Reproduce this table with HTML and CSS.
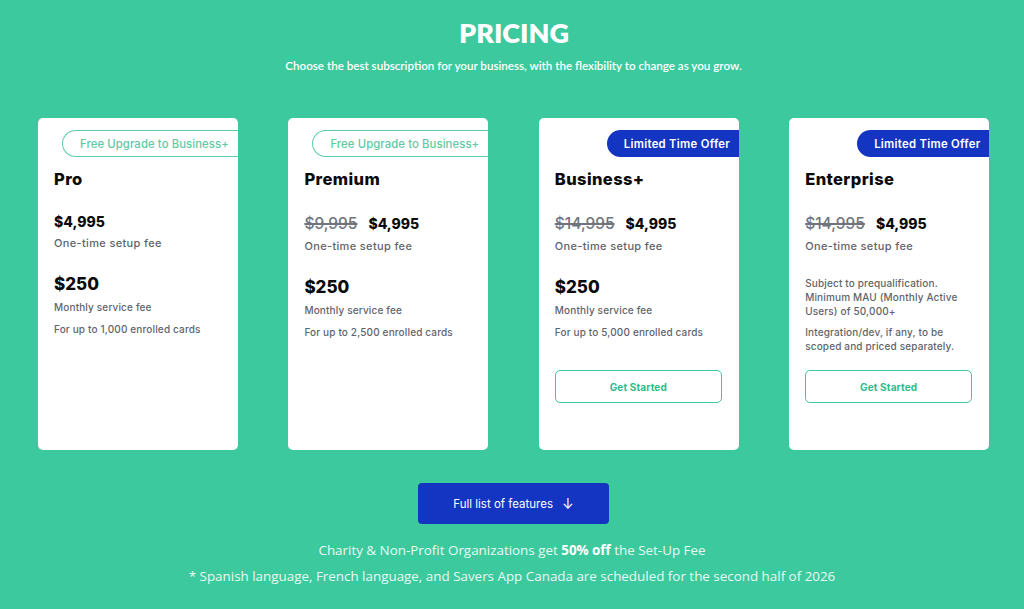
FILE: index.html
```html
<!DOCTYPE html>
<html lang="en">
<head>
<meta charset="utf-8">
<title>Pricing</title>
<link rel="stylesheet" href="styles.css">
</head>
<body>
<section class="pricing">
  <h1 class="title">PRICING</h1>
  <p class="subtitle">Choose the best subscription for your business, with the flexibility to change as you grow.</p>

  <div class="cards">
    <div class="card">
      <div class="badge-row"><span class="badge badge-outline">Free Upgrade to Business+</span></div>
      <h2 class="plan">Pro</h2>
      <div class="setup"><span class="price">$4,995</span></div>
      <p class="note">One-time setup fee</p>
      <div class="monthly">$250</div>
      <p class="small">Monthly service fee</p>
      <p class="small">For up to 1,000 enrolled cards</p>
    </div>

    <div class="card">
      <div class="badge-row"><span class="badge badge-outline">Free Upgrade to Business+</span></div>
      <h2 class="plan">Premium</h2>
      <div class="setup"><s class="old">$9,995</s><span class="price">$4,995</span></div>
      <p class="note">One-time setup fee</p>
      <div class="monthly">$250</div>
      <p class="small">Monthly service fee</p>
      <p class="small">For up to 2,500 enrolled cards</p>
    </div>

    <div class="card">
      <div class="badge-row"><span class="badge badge-blue">Limited Time Offer</span></div>
      <h2 class="plan">Business+</h2>
      <div class="setup"><s class="old">$14,995</s><span class="price">$4,995</span></div>
      <p class="note">One-time setup fee</p>
      <div class="monthly">$250</div>
      <p class="small">Monthly service fee</p>
      <p class="small">For up to 5,000 enrolled cards</p>
      <a class="start start-biz" href="#">Get Started</a>
    </div>

    <div class="card">
      <div class="badge-row"><span class="badge badge-blue">Limited Time Offer</span></div>
      <h2 class="plan">Enterprise</h2>
      <div class="setup"><s class="old">$14,995</s><span class="price">$4,995</span></div>
      <p class="note">One-time setup fee</p>
      <p class="desc desc-first">Subject to prequalification. Minimum MAU (Monthly Active Users) of 50,000+</p>
      <p class="desc">Integration/dev, if any, to be scoped and priced separately.</p>
      <a class="start" href="#">Get Started</a>
    </div>
  </div>

  <div class="features-wrap">
    <a class="features" href="#">Full list of features <span class="arrow">&#8595;</span></a>
  </div>

  <p class="foot">Charity &amp; Non-Profit Organizations get <b>50% off</b> the Set-Up Fee</p>
  <p class="foot foot2">* Spanish language, French language, and Savers App Canada are scheduled for the second half of 2026</p>
</section>
</body>
</html>
```

FILE: styles.css
```css
* { box-sizing: border-box; }
html, body { margin: 0; padding: 0; }
body {
  background: #3bc99d;
  width: 1024px;
  height: 609px;
  overflow: hidden;
  font-family: "Open Sans", sans-serif;
}
.pricing { padding-top: 17px; }
.title {
  margin: 0;
  text-align: center;
  color: #ffffff;
  font-family: "Lato", sans-serif;
  font-weight: 800;
  font-size: 27px;
  line-height: 32px;
  padding-left: 4px;
}
.subtitle {
  margin: 10px 0 0;
  text-align: center;
  color: #ffffff;
  font-family: "Lato", sans-serif;
  font-size: 11.6px;
  line-height: 14px;
  font-weight: 600;
  padding-left: 3px;
}
.cards {
  display: flex;
  gap: 50.4px;
  padding-left: 38px;
  margin-top: 45px;
}
.card {
  width: 200px;
  height: 332px;
  background: #fff;
  border-radius: 5px;
  overflow: hidden;
  padding: 12px 0 0 16px;
  font-family: "Inter", sans-serif;
}
.badge-row { display: flex; justify-content: flex-end; height: 27px; }
.badge {
  display: flex;
  align-items: center;
  height: 27px;
  border-radius: 14px 0 0 14px;
  font-size: 11.3px;
  white-space: nowrap;
}
.badge-outline {
  width: 176px;
  border: 1.5px solid #5ccfa8;
  border-right: none;
  color: #62c9a2;
  padding-left: 17px;
  font-weight: 500;
  letter-spacing: 0.1px;
}
.badge-blue {
  width: 132px;
  background: #1434c2;
  color: #fff;
  padding-left: 17px;
  font-weight: 600;
  letter-spacing: 0.3px;
}
.plan {
  margin: 12px 0 0;
  font-size: 16.5px;
  line-height: 20px;
  font-weight: 800;
  color: #0b0b0b;
  letter-spacing: 0.4px;
}
.setup {
  margin-top: 23px;
  display: flex;
  align-items: center;
  gap: 11px;
}
.old {
  color: #6f747d;
  font-size: 15.5px;
  line-height: 23px;
  font-weight: 500;
  text-decoration-thickness: 1.5px;
}
.price {
  font-size: 14px;
  line-height: 20px;
  font-weight: 800;
  color: #0b0b0b;
}
.note {
  margin: 4px 0 0;
  font-size: 11px;
  line-height: 14px;
  color: #5f646c;
  font-weight: 500;
  letter-spacing: 0.35px;
}
.monthly {
  margin-top: 23px;
  font-size: 17px;
  line-height: 22px;
  font-weight: 800;
  color: #0b0b0b;
}
.small {
  margin: 5px 0 0;
  font-size: 10px;
  line-height: 14px;
  color: #5f646c;
  font-weight: 500;
  letter-spacing: 0.15px;
}
.small + .small { margin-top: 8px; }
.desc {
  margin: 7px 0 0;
  width: 168px;
  font-size: 10px;
  line-height: 14px;
  color: #5f646c;
  font-weight: 500;
  letter-spacing: 0.15px;
}
.desc-first { margin-top: 23px; }
.start {
  display: flex;
  align-items: center;
  justify-content: center;
  width: 167px;
  height: 33px;
  margin-top: 17px;
  border: 1.5px solid #3bc99d;
  border-radius: 5px;
  color: #2dbb8c;
  font-size: 10px;
  font-weight: 700;
  letter-spacing: 0.15px;
  text-decoration: none;
}
.start-biz { margin-top: 31px; }
.features-wrap {
  display: flex;
  justify-content: center;
  margin-top: 33px;
}
.features {
  display: flex;
  align-items: center;
  justify-content: center;
  gap: 9px;
  width: 191px;
  height: 41px;
  margin-left: 3px;
  background: #1434c2;
  border-radius: 4px;
  color: #fff;
  font-family: "Inter", sans-serif;
  font-size: 11.5px;
  text-decoration: none;
}
.arrow { font-size: 14px; }
.foot {
  margin: 18px 0 0;
  text-align: center;
  color: #eaf9f3;
  font-size: 13.4px;
  line-height: 16px;
}
.foot b { font-weight: 700; color: #fff; }
.foot2 { margin-top: 10px; }
```
